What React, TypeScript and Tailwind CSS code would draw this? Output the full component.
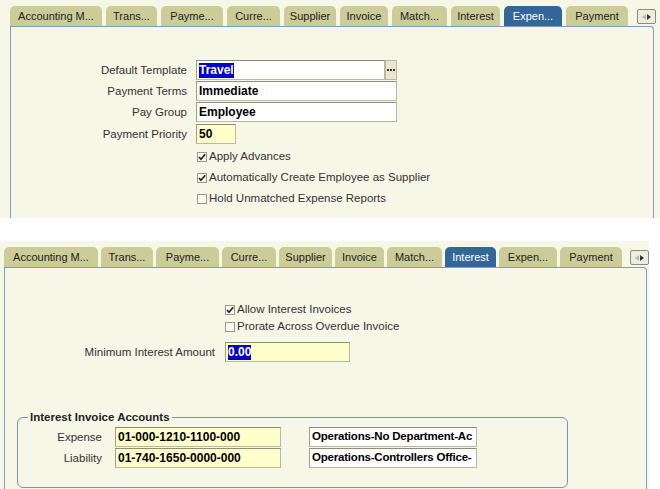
import clsx from 'clsx';

type TabDef = { label: string; w: string };

const topTabs: TabDef[] = [
  { label: 'Accounting M...', w: 'w-[92px]' },
  { label: 'Trans...', w: 'w-[51px]' },
  { label: 'Payme...', w: 'w-[62px]' },
  { label: 'Curre...', w: 'w-[53px]' },
  { label: 'Supplier', w: 'w-[52px]' },
  { label: 'Invoice', w: 'w-[48px]' },
  { label: 'Match...', w: 'w-[55px]' },
  { label: 'Interest', w: 'w-[49px]' },
  { label: 'Expen...', w: 'w-[58px]' },
  { label: 'Payment', w: 'w-[62px]' },
];

const bottomTabs: TabDef[] = [
  { label: 'Accounting M...', w: 'w-[94px]' },
  { label: 'Trans...', w: 'w-[52px]' },
  { label: 'Payme...', w: 'w-[63px]' },
  { label: 'Curre...', w: 'w-[54px]' },
  { label: 'Supplier', w: 'w-[53px]' },
  { label: 'Invoice', w: 'w-[49px]' },
  { label: 'Match...', w: 'w-[55px]' },
  { label: 'Interest', w: 'w-[51px]' },
  { label: 'Expen...', w: 'w-[58px]' },
  { label: 'Payment', w: 'w-[62px]' },
];

function Tab({ tab, active }: { tab: TabDef; active: boolean }) {
  return (
    <div
      className={clsx(
        'h-[20px] rounded-t-[5px] flex items-center justify-center text-[11px] whitespace-nowrap',
        tab.w,
        active ? 'bg-[#336699] text-white' : 'bg-[#cccc99] text-[#222]'
      )}
    >
      {tab.label}
    </div>
  );
}

function ScrollArrows() {
  return (
    <div className="mt-[3px] ml-[5px] w-[19px] h-[15px] rounded-[2px] border border-[#8a8a80] bg-[#ececdf] flex items-center justify-center gap-[1px]">
      <svg width="4" height="6" viewBox="0 0 4 6" aria-hidden="true">
        <path d="M4 0 L0 3 L4 6 Z" fill="#b9b9b0" />
      </svg>
      <svg width="4" height="6" viewBox="0 0 4 6" aria-hidden="true">
        <path d="M0 0 L4 3 L0 6 Z" fill="#333" />
      </svg>
    </div>
  );
}

function TabRow({ tabs, active, gap }: { tabs: TabDef[]; active: string; gap: string }) {
  return (
    <div className={clsx('flex items-start', gap)}>
      {tabs.map((t) => (
        <Tab key={t.label} tab={t} active={t.label === active} />
      ))}
      <ScrollArrows />
    </div>
  );
}

function Field({
  value,
  w,
  yellow,
  selected,
  small,
}: {
  value: string;
  w: string;
  yellow?: boolean;
  selected?: boolean;
  small?: boolean;
}) {
  return (
    <div
      className={clsx(
        'h-[20px] border border-[#b9b9a2] border-t-[#8e8e78] border-l-[#a0a08a] flex items-center pl-[2px] overflow-hidden whitespace-nowrap font-bold text-black',
        small ? 'text-[11.5px] tracking-[-0.2px]' : 'text-[12px]',
        w,
        yellow ? 'bg-[#ffffcc]' : 'bg-white'
      )}
    >
      {selected ? <span className="bg-[#0000cc] text-white leading-[15px]">{value}</span> : value}
    </div>
  );
}

function Check({ label, checked, h }: { label: string; checked?: boolean; h: string }) {
  return (
    <div className={clsx('flex items-center gap-[2px] text-[11.5px] text-[#333]', h)}>
      <span className="w-[10px] h-[10px] border border-[#9a9a8c] bg-[#fafaf2] flex items-center justify-center">
        {checked && (
          <svg width="8" height="8" viewBox="0 0 8 8" aria-hidden="true">
            <path d="M1 4 L3 6.2 L7.2 1.2" fill="none" stroke="#222" strokeWidth="1.7" />
          </svg>
        )}
      </span>
      <span>{label}</span>
    </div>
  );
}

function Label({ children }: { children: React.ReactNode }) {
  return <div className="text-right text-[11.5px] text-[#333] leading-[20px] whitespace-nowrap">{children}</div>;
}

function ExpensesPanel() {
  return (
    <div className="h-[218px] bg-[#f7f7e7] pl-[10px] pt-[6px] overflow-hidden">
      <TabRow tabs={topTabs} active="Expen..." gap="gap-[4px]" />
      <div className="w-[644px] h-[200px] border-t border-l border-r border-[#7d9dc4] rounded-tr-[4px] pt-[33px]">
        <div className="grid grid-cols-[176px_auto] gap-x-[9px] gap-y-[1px] items-center">
          <Label>Default Template</Label>
          <div className="flex">
            <Field value="Travel" w="w-[189px]" selected />
            <div className="w-[12px] h-[20px] border border-[#b9b9a2] bg-[#e6e6d2] flex items-center justify-center gap-[1px]">
              <span className="w-[2px] h-[2px] bg-[#5a2b2b]" />
              <span className="w-[2px] h-[2px] bg-[#5a2b2b]" />
              <span className="w-[2px] h-[2px] bg-[#5a2b2b]" />
            </div>
          </div>
          <Label>Payment Terms</Label>
          <Field value="Immediate" w="w-[201px]" />
          <Label>Pay Group</Label>
          <Field value="Employee" w="w-[201px]" />
          <Label>Payment Priority</Label>
          <div className="pt-[1px]">
            <Field value="50" w="w-[40px]" yellow />
          </div>
        </div>
        <div className="pl-[186px] pt-[2px]">
          <Check label="Apply Advances" checked h="h-[21px]" />
          <Check label="Automatically Create Employee as Supplier" checked h="h-[21px]" />
          <Check label="Hold Unmatched Expense Reports" h="h-[21px]" />
        </div>
      </div>
    </div>
  );
}

function InterestPanel() {
  return (
    <div className="mt-[23px] w-[649px] h-[248px] bg-[#f7f7e7] pl-[4px] pt-[6px] overflow-hidden">
      <TabRow tabs={bottomTabs} active="Interest" gap="gap-[3px]" />
      <div className="w-[643px] h-[230px] border-t border-l border-r border-[#7d9dc4] rounded-tr-[4px] pt-[33px]">
        <div className="pl-[220px]">
          <Check label="Allow Interest Invoices" checked h="h-[17px]" />
          <Check label="Prorate Across Overdue Invoice" h="h-[17px]" />
        </div>
        <div className="mt-[7px] flex items-center gap-[10px]">
          <div className="w-[210px]">
            <Label>Minimum Interest Amount</Label>
          </div>
          <Field value="0.00" w="w-[125px]" yellow selected />
        </div>
        <fieldset className="mt-[48px] ml-[12px] w-[551px] border border-[#7d93b0] rounded-[6px] pb-[19px]">
          <legend className="ml-[10px] px-[2px] text-[11.5px] font-bold text-[#222] leading-[14px]">
            Interest Invoice Accounts
          </legend>
          <div className="mt-[3px] grid grid-cols-[84px_166px_168px] gap-x-[13px] gap-y-[1px] items-center">
            <Label>Expense</Label>
            <Field value="01-000-1210-1100-000" w="w-[166px]" yellow />
            <div className="ml-[15px]">
              <Field value="Operations-No Department-Ac" w="w-[168px]" small />
            </div>
            <Label>Liability</Label>
            <Field value="01-740-1650-0000-000" w="w-[166px]" yellow />
            <div className="ml-[15px]">
              <Field value="Operations-Controllers Office-" w="w-[168px]" small />
            </div>
          </div>
        </fieldset>
      </div>
    </div>
  );
}

export default function App() {
  return (
    <div className="w-[660px] h-[489px] bg-white overflow-hidden font-['Liberation_Sans',Arial,sans-serif]">
      <ExpensesPanel />
      <InterestPanel />
    </div>
  );
}
